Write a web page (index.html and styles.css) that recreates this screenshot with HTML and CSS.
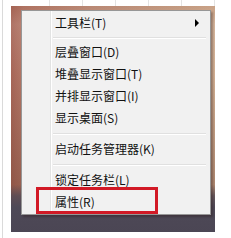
FILE: index.html
```html
<!DOCTYPE html>
<html lang="zh-CN">
<head>
<meta charset="utf-8">
<link rel="stylesheet" href="styles.css">
</head>
<body>
<div class="frame">
  <div class="cells">
    <div class="cell cell-first"></div>
    <div class="cell"></div>
    <div class="cell"></div>
    <div class="cell"></div>
    <div class="cell"></div>
    <div class="cell"></div>
  </div>
  <div class="photo">
    <div class="menu">
      <div class="item"><span class="label">工具栏(T)</span><span class="arrow"></span></div>
      <div class="sep sep-first"></div>
      <div class="item"><span class="label">层叠窗口(D)</span></div>
      <div class="item"><span class="label">堆叠显示窗口(T)</span></div>
      <div class="item"><span class="label">并排显示窗口(I)</span></div>
      <div class="item"><span class="label">显示桌面(S)</span></div>
      <div class="sep"></div>
      <div class="item"><span class="label">启动任务管理器(K)</span></div>
      <div class="sep"></div>
      <div class="item"><span class="label">锁定任务栏(L)</span></div>
      <div class="item"><span class="label">属性(R)</span></div>
    </div>
    <div class="redbox"></div>
  </div>
</div>
</body>
</html>
```
FILE: styles.css
```css
html, body {
  margin: 0;
  padding: 0;
  background: #ffffff;
}
body {
  width: 231px;
  height: 238px;
  overflow: hidden;
  font-family: "Noto Sans CJK SC", "Microsoft YaHei", sans-serif;
}
.frame {
  margin-left: 2px;
  border-left: 1px solid #dadada;
  height: 238px;
  display: flex;
  flex-direction: column;
}
.cells {
  display: flex;
  height: 6px;
  flex: none;
}
.cell {
  width: 32px;
  border-right: 1px solid #e4e4e4;
  flex: none;
}
.cell-first {
  width: 46px;
}
.photo {
  position: relative;
  margin-left: 8px;
  width: 204px;
  height: 226px;
  box-sizing: border-box;
  padding: 4px 0 0 10px;
  background:
    linear-gradient(to bottom, rgba(78,72,86,0) 0, rgba(78,72,86,0) 79%, rgba(78,72,86,0.75) 84%, #4e4957 89%, #4b4654 100%),
    linear-gradient(to bottom, rgba(150,80,60,0.25) 0, rgba(200,160,150,0.2) 8%, rgba(150,80,60,0.1) 30%, rgba(110,60,45,0.4) 78%),
    linear-gradient(to right, #a8685a 0, #b67c6c 6%, #c49a86 40%, #d2b296 85%, #d9bc9e 100%);
}
.menu {
  width: 190px;
  height: 205px;
  box-sizing: border-box;
  border: 1px solid #979797;
  padding: 1px 2px;
  background:
    linear-gradient(to right, transparent 0, transparent 28px, #e2e3e3 28px, #e2e3e3 29px, #ffffff 29px, #ffffff 30px, transparent 30px),
    #f1f1f1;
  box-shadow: 2px 2px 2px rgba(40, 20, 20, 0.35);
  display: flex;
  flex-direction: column;
}
.item {
  height: 22px;
  display: flex;
  align-items: center;
  padding-left: 31px;
  padding-right: 9px;
  font-size: 12px;
  color: #111111;
  line-height: 22px;
  flex: none;
}
.label {
  white-space: nowrap;
}
.arrow {
  margin-left: auto;
  width: 0;
  height: 0;
  border-top: 4px solid transparent;
  border-bottom: 4px solid transparent;
  border-left: 4px solid #000000;
}
.sep {
  height: 9px;
  flex: none;
  margin-left: 29px;
  margin-right: 2px;
  background: linear-gradient(to bottom, transparent 4px, #e0e0e0 4px, #e0e0e0 5px, #ffffff 5px, #ffffff 6px, transparent 6px);
}
.sep-first {
  height: 7px;
  background: linear-gradient(to bottom, transparent 3px, #e0e0e0 3px, #e0e0e0 4px, #ffffff 4px, #ffffff 5px, transparent 5px);
}
.redbox {
  position: absolute;
  left: 25px;
  top: 181px;
  width: 122px;
  height: 27px;
  box-sizing: border-box;
  border: 3px solid #d21a26;
}
```
